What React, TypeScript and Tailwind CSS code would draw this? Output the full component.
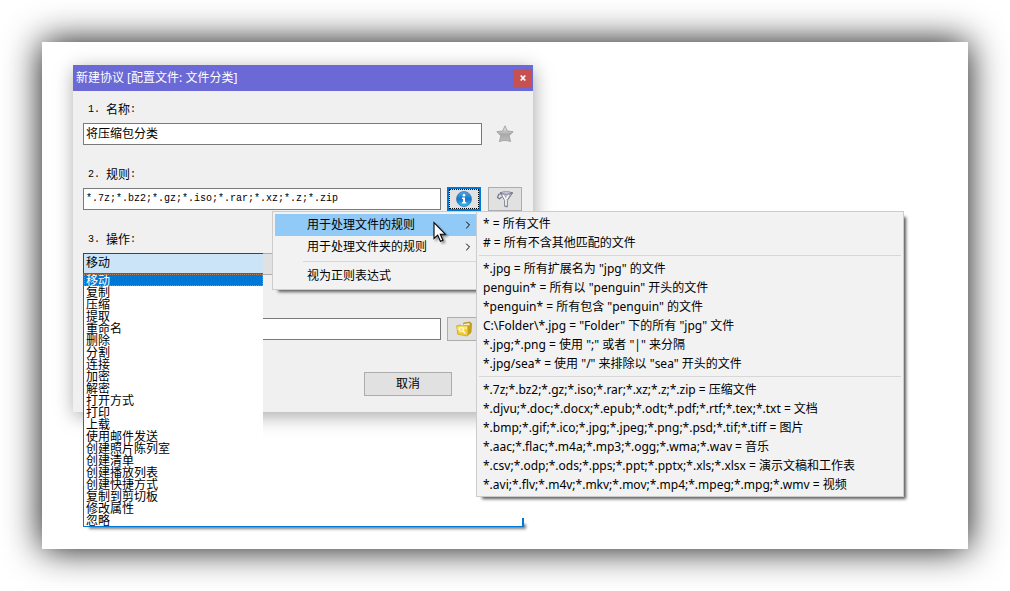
import { useState } from 'react';
import { ChevronRight } from 'lucide-react';

const actions = [
  '移动', '复制', '压缩', '提取', '重命名', '删除', '分割',
  '连接', '加密', '解密', '打开方式', '打印', '上载', '使用邮件发送',
  '创建照片陈列室', '创建清单', '创建播放列表', '创建快捷方式', '复制到剪切板', '修改属性', '忽略',
];

const ruleGroups = [
  ['* = 所有文件', '# = 所有不含其他匹配的文件'],
  [
    '*.jpg = 所有扩展名为 "jpg" 的文件',
    'penguin* = 所有以 "penguin" 开头的文件',
    '*penguin* = 所有包含 "penguin" 的文件',
    'C:\\Folder\\*.jpg = "Folder" 下的所有 "jpg" 文件',
    '*.jpg;*.png = 使用 ";" 或者 "|" 来分隔',
    '*.jpg/sea* = 使用 "/" 来排除以 "sea" 开头的文件',
  ],
  [
    '*.7z;*.bz2;*.gz;*.iso;*.rar;*.xz;*.z;*.zip = 压缩文件',
    '*.djvu;*.doc;*.docx;*.epub;*.odt;*.pdf;*.rtf;*.tex;*.txt = 文档',
    '*.bmp;*.gif;*.ico;*.jpg;*.jpeg;*.png;*.psd;*.tif;*.tiff = 图片',
    '*.aac;*.flac;*.m4a;*.mp3;*.ogg;*.wma;*.wav = 音乐',
    '*.csv;*.odp;*.ods;*.pps;*.ppt;*.pptx;*.xls;*.xlsx = 演示文稿和工作表',
    '*.avi;*.flv;*.m4v;*.mkv;*.mov;*.mp4;*.mpeg;*.mpg;*.wmv = 视频',
  ],
];

const inputClass = 'h-[22px] border border-[#7a7a7a] bg-white px-0.5 pb-0.5 outline-none';
const buttonClass = 'flex h-6 w-[34px] shrink-0 items-center justify-center border border-[#adadad] bg-[#e1e1e1]';

function StarIcon() {
  return (
    <svg width="18" height="18" viewBox="0 0 18 18">
      <defs>
        <linearGradient id="star" x1="0" y1="0" x2="0" y2="1">
          <stop offset="0" stopColor="#f0f0f0" />
          <stop offset="0.35" stopColor="#c4c4c4" />
          <stop offset="0.55" stopColor="#a9a9a9" />
          <stop offset="1" stopColor="#bdbdbd" />
        </linearGradient>
      </defs>
      <path
        d="M9 0.8l2.3 5.2 5.9.7-4.1 4 1.5 5.900c-3.500-1.500-7.700-1.500-11.200 0l1.500-5.900-4.100-4L6.700 6z"
        fill="url(#star)"
        stroke="#a0a0a0"
        strokeWidth="0.9"
        strokeLinejoin="round"
      />
    </svg>
  );
}

function InfoIcon() {
  return (
    <svg width="16" height="16" viewBox="0 0 16 16">
      <defs>
        <linearGradient id="info" x1="0" y1="0" x2="0" y2="1">
          <stop offset="0" stopColor="#5ba5e0" />
          <stop offset="0.5" stopColor="#1277cc" />
          <stop offset="1" stopColor="#2fc0f8" />
        </linearGradient>
      </defs>
      <circle cx="8" cy="8" r="7.5" fill="url(#info)" stroke="#3a78b5" strokeWidth="0.8" />
      <circle cx="8" cy="4.3" r="1.3" fill="#fff" />
      <path d="M6 6.6h3v4.4h1.2v1.4H5.9V11h1.2V8H6z" fill="#fff" />
    </svg>
  );
}

function FunnelIcon() {
  return (
    <svg width="18" height="18" viewBox="0 0 18 18">
      <path d="M5 3.500L2.600 4.500 1.500 7.500l2 1.200 2.200-1.500" fill="#dcdce6" stroke="#77778a" strokeWidth="1.2" />
      <path d="M4.500 3l4.200 7.500v5.800l2.600.7v-6.500L16.500 3z" fill="#b9b9c8" stroke="#74748a" strokeWidth="0.9" strokeLinejoin="round" />
      <path d="M7 5l3 5.500v5M12.500 5l-2 4" fill="none" stroke="#fff" strokeWidth="1.4" />
      <path d="M4 2.800c3-1.300 9.500-1.300 12.700 0-2.500 1.700-10 1.700-12.700 0z" fill="#ececf4" stroke="#74748a" strokeWidth="0.9" />
    </svg>
  );
}

function FolderIcon() {
  return (
    <svg width="16" height="16" viewBox="0 0 16 16">
      <path d="M7.500 2l6.500-1 1.500 1.500-.5 9-3.500 3z" fill="#c9a11c" stroke="#a98512" strokeWidth="0.6" />
      <path d="M8 3l5.500-.8v2L8 4.500z" fill="#fdf6c8" />
      <path d="M.7 4.800L4 4l1.500 1 6.300-.6.200 9.800-1 .8-9.300-1.800z" fill="#f2cf3a" stroke="#c79f17" strokeWidth="0.7" />
      <path d="M1.400 5.800l9.800-.5v3.200L1.500 9z" fill="#fbe67c" />
      <circle cx="5.400" cy="8.500" r="2" fill="none" stroke="#fffbe6" strokeWidth="1.200" />
      <path d="M7 10l2.200 2.200" stroke="#fffbe6" strokeWidth="1.500" />
    </svg>
  );
}

function Pointer() {
  return (
    <svg
      className="pointer-events-none absolute top-[156px] left-[360px] z-30 drop-shadow-[2px_2px_1px_rgba(0,0,0,0.4)]"
      width="14"
      height="22"
      viewBox="0 0 14 22"
    >
      <path d="M1 1.500v16l3.700-3.400 2.700 6.200 2.600-1.100-2.700-6h5z" fill="#fff" stroke="#000" strokeWidth="1.100" />
    </svg>
  );
}

function FieldLabel({ number, text, htmlFor }: { number: string; text: string; htmlFor: string }) {
  return (
    <label htmlFor={htmlFor} className="flex h-[22px] items-center pl-[5px] whitespace-pre">
      <span className="font-['Liberation_Mono',monospace] text-[10px]">{number}. </span>
      <span>{text}</span>
      <span className="font-['Liberation_Mono',monospace] text-[10px]">:</span>
    </label>
  );
}

function RulesMenu() {
  return (
    <div
      role="menu"
      className="absolute top-[146px] left-[199px] z-10 w-[208px] border border-[#ccc] bg-[#f2f2f2] p-0.5 shadow-[4px_4px_3px_-2px_rgba(0,0,0,0.6)]"
    >
      <button role="menuitem" className="flex h-[22px] w-full items-center justify-between bg-[#91c9f7] pr-[3px] pl-8">
        用于处理文件的规则
        <ChevronRight size={12} strokeWidth={2} />
      </button>
      <button role="menuitem" className="flex h-[22px] w-full items-center justify-between pr-[3px] pl-8">
        用于处理文件夹的规则
        <ChevronRight size={12} strokeWidth={2} />
      </button>
      <hr className="my-[3px] ml-7 border-[#d7d7d7]" />
      <button role="menuitem" className="flex h-[22px] w-full items-center pl-8">
        视为正则表达式
      </button>
    </div>
  );
}

function FileRulesMenu({ onPick }: { onPick: (rule: string) => void }) {
  return (
    <div
      role="menu"
      className="absolute top-[146px] left-[403px] z-20 w-[428px] border border-[#ccc] bg-[#f2f2f2] p-0.5 shadow-[4px_4px_3px_-2px_rgba(0,0,0,0.65)]"
    >
      {ruleGroups.map((group, index) => (
        <div key={group[0]}>
          {index > 0 && <hr className="my-[3px] border-[#d7d7d7]" />}
          {group.map((rule) => (
            <button
              key={rule}
              role="menuitem"
              onClick={() => onPick(rule.split(' = ')[0])}
              className="flex h-[19px] w-full items-center pl-1 whitespace-pre"
            >
              {rule}
            </button>
          ))}
        </div>
      ))}
    </div>
  );
}

function ActionList({ selected, onSelect }: { selected: string; onSelect: (action: string) => void }) {
  return (
    <>
      {/* bottom edge of the drop-down frame */}
      <div className="absolute top-[453px] left-[10px] h-[9px] w-[441px] border-r-2 border-b border-[#0078d7] bg-white shadow-[4px_4px_3px_-2px_rgba(0,0,0,0.5)]" />
      <ul
        role="listbox"
        aria-label="操作"
        className="absolute top-[208px] left-[10px] w-[180px] border-t border-l border-[#0078d7] bg-white leading-[14px]"
      >
        {actions.map((action) => (
          <li
            key={action}
            role="option"
            aria-selected={action === selected}
            onClick={() => onSelect(action)}
            className={`h-3 pl-0.5 ${
              action === selected
                ? 'bg-[#0078d7] text-white outline-1 -outline-offset-1 outline-dotted outline-[#ff8728]/70'
                : ''
            }`}
          >
            {action}
          </li>
        ))}
      </ul>
    </>
  );
}

export default function App() {
  const [name, setName] = useState('将压缩包分类');
  const [rules, setRules] = useState('*.7z;*.bz2;*.gz;*.iso;*.rar;*.xz;*.z;*.zip');
  const [action, setAction] = useState('移动');
  const [target, setTarget] = useState('');

  return (
    <div className="flex min-h-screen overflow-hidden bg-white p-[42px] font-['Noto_Sans','Noto_Sans_CJK_SC',sans-serif] text-xs text-black">
      <main className="flex-1 bg-white pt-[23px] pl-[31px] shadow-[0_0_34px_rgba(0,0,0,0.95)]">
        <div
          role="dialog"
          aria-labelledby="dialog-title"
          className="relative w-[460px] bg-[#f0f0f0] shadow-[1px_4px_18px_rgba(0,0,0,0.35)]"
        >
          {/* Title bar */}
          <header className="flex h-[26px] items-center justify-between bg-[#6b69d6] pr-px pl-[3px] text-white">
            <h1 id="dialog-title">新建协议 [配置文件: 文件分类]</h1>
            <button aria-label="关闭" className="flex h-[19px] w-[19px] items-center justify-center bg-[#c75050]">
              <svg width="6" height="6" viewBox="0 0 6 6">
                <path d="M0.700 0.500l4.600 5M5.300 0.500l-4.600 5" stroke="#fff" strokeWidth="1.600" />
              </svg>
            </button>
          </header>

          <form className="flex flex-col gap-[18px] px-2.5 pt-2 pb-4" onSubmit={(e) => e.preventDefault()}>
            <div className="flex flex-col gap-px">
              <FieldLabel number="1" text="名称" htmlFor="name" />
              <div className="flex h-6 items-center">
                <input
                  id="name"
                  value={name}
                  onChange={(e) => setName(e.target.value)}
                  className={`${inputClass} w-[399px]`}
                />
                <button type="button" aria-label="收藏" className="ml-3.5">
                  <StarIcon />
                </button>
              </div>
            </div>

            <div className="flex flex-col gap-px">
              <FieldLabel number="2" text="规则" htmlFor="rules" />
              <div className="flex h-6 items-center">
                <input
                  id="rules"
                  value={rules}
                  onChange={(e) => setRules(e.target.value)}
                  className={`${inputClass} w-[358px] font-['Liberation_Mono',monospace] text-[10px]`}
                />
                <button
                  type="button"
                  aria-label="规则说明"
                  className="ml-1.5 flex h-6 w-[34px] items-center justify-center border-2 border-[#0078d7] bg-[#e1e1e1] outline-1 -outline-offset-3 outline-dotted outline-black"
                >
                  <InfoIcon />
                </button>
                <button type="button" aria-label="筛选" className={`${buttonClass} ml-[7px]`}>
                  <FunnelIcon />
                </button>
              </div>
            </div>

            <div className="flex flex-col gap-px">
              <FieldLabel number="3" text="操作" htmlFor="action" />
              <div className="flex h-6 items-center">
                <select
                  id="action"
                  value={action}
                  onChange={(e) => setAction(e.target.value)}
                  className="h-[22px] w-[180px] appearance-none border-y border-l border-[#005499] bg-[#cce4f7] pb-0.5 pl-0.5 outline-none"
                >
                  {actions.map((item) => (
                    <option key={item}>{item}</option>
                  ))}
                </select>
                <div className="h-[22px] w-[178px] border-y border-r border-[#adadad] bg-[#e1e1e1]" />
              </div>
            </div>

            <div className="mt-[23px] flex h-6 items-center">
              <input
                aria-label="目标文件夹"
                value={target}
                onChange={(e) => setTarget(e.target.value)}
                className={`${inputClass} w-[358px]`}
              />
              <button type="button" aria-label="浏览" className={`${buttonClass} ml-1.5`}>
                <FolderIcon />
              </button>
            </div>

            <button
              type="button"
              className="mt-[13px] mr-[71px] h-6 w-[88px] self-end border border-[#adadad] bg-[#e1e1e1]"
            >
              取消
            </button>
          </form>

          <ActionList selected={action} onSelect={setAction} />
          <RulesMenu />
          <FileRulesMenu onPick={setRules} />
          <Pointer />
        </div>
      </main>
    </div>
  );
}
